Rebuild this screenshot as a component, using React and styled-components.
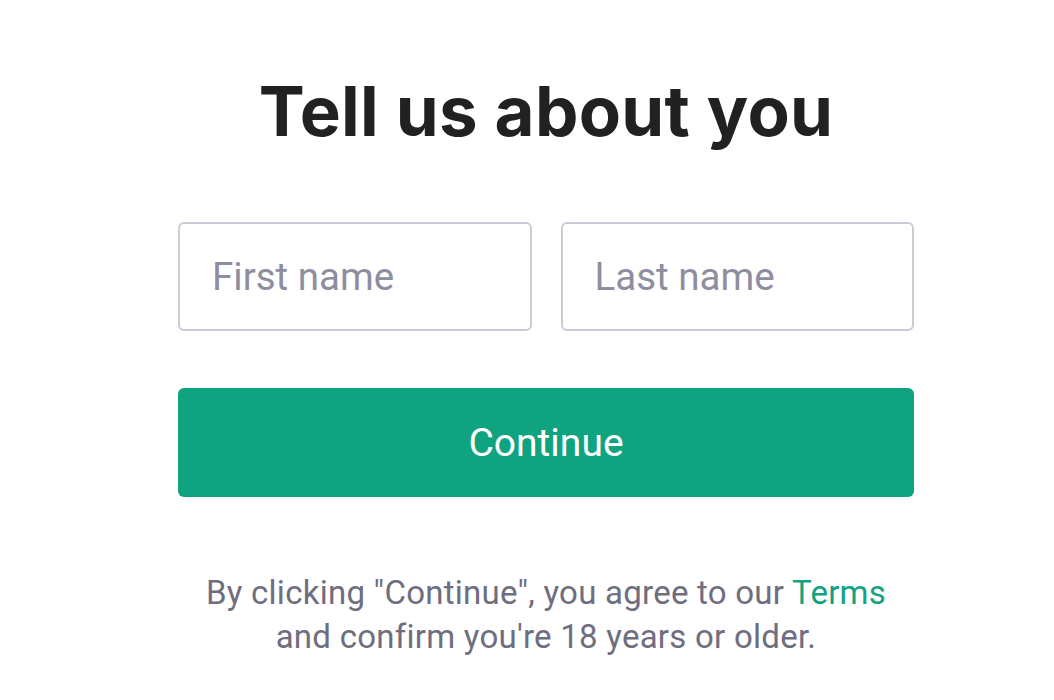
import React from "react";
import styled, { createGlobalStyle } from "styled-components";

const GlobalStyle = createGlobalStyle`
    html, body {
        margin: 0;
        padding: 0;
        background: #fff;
    }

    body {
        font-family: Roboto, "Liberation Sans", sans-serif;
        color: #202123;
    }
`;

const Page = styled.main`
    display: flex;
    flex-direction: column;
    align-items: center;
    padding: 66px 0 0 38px;
    min-height: 700px;
    box-sizing: border-box;
`;

const Form = styled.section`
    width: 736px;
    display: flex;
    flex-direction: column;
    align-items: center;
`;

const Title = styled.h1`
    margin: 0 0 66px;
    font-family: Inter, "Liberation Sans", sans-serif;
    font-size: 69px;
    font-weight: 700;
    letter-spacing: 0.3px;
    line-height: 90px;
    color: #202123;
`;

const NameRow = styled.div`
    width: 100%;
    display: grid;
    grid-template-columns: 1fr 1fr;
    gap: 29px;
`;

const Input = styled.input`
    width: 100%;
    min-width: 0;
    height: 109px;
    box-sizing: border-box;
    border: 2px solid #c9cbd6;
    border-radius: 6px;
    padding: 0 32px;
    font-family: Roboto, "Liberation Sans", sans-serif;
    font-size: 38.5px;
    color: #202123;
    outline: none;

    &::placeholder {
        color: #8e8ea0;
    }
`;

const Button = styled.button`
    width: 100%;
    height: 109px;
    margin-top: 57px;
    border: none;
    border-radius: 6px;
    background: #10a37f;
    color: #fff;
    font-family: Roboto, "Liberation Sans", sans-serif;
    font-size: 39px;
    cursor: pointer;
`;

const Note = styled.p`
    margin: 74px 0 0;
    text-align: center;
    font-family: Roboto, "Liberation Sans", sans-serif;
    font-size: 33px;
    line-height: 44px;
    letter-spacing: 0.25px;
    color: #6e6e80;

    & a {
        color: #10a37f;
        text-decoration: none;
    }
`;

export default function App() {
    return (
        <>
            <GlobalStyle />
            <Page>
                <Form>
                    <Title>Tell us about you</Title>
                    <NameRow>
                        <Input placeholder="First name" />
                        <Input placeholder="Last name" />
                    </NameRow>
                    <Button>Continue</Button>
                    <Note>
                        By clicking "Continue", you agree to our <a href="#">Terms</a>
                        <br />
                        and confirm you're 18 years or older.
                    </Note>
                </Form>
            </Page>
        </>
    );
}
